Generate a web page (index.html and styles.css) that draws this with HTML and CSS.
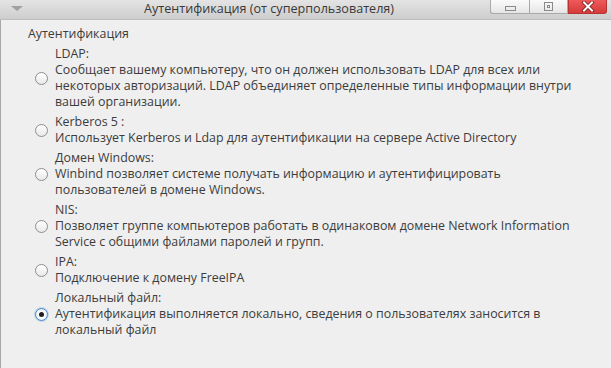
FILE: index.html
```html
<!DOCTYPE html>
<html lang="ru">
<head>
<meta charset="utf-8">
<title>Аутентификация</title>
<link rel="stylesheet" href="styles.css">
</head>
<body>
<div class="window">
  <div class="titlebar">
    <span class="menu-arrow"></span>
    <span class="title">Аутентификация (от суперпользователя)</span>
    <div class="controls">
      <span class="btn btn-min"><span class="min-icon"></span></span>
      <span class="btn btn-max"><span class="max-icon"></span></span>
      <span class="btn btn-close"><svg width="14" height="11" viewBox="0 0 14 11"><path d="M3 1.5 L11 9.5 M11 1.5 L3 9.5" stroke="#7a1515" stroke-width="3.6" stroke-linecap="square"/><path d="M3 1.5 L11 9.5 M11 1.5 L3 9.5" stroke="#ffffff" stroke-width="2" stroke-linecap="square"/></svg></span>
    </div>
  </div>
  <div class="content">
    <div class="group-title">Аутентификация</div>
    <div class="options">
      <label class="option"><span class="radio"></span><span class="text">LDAP:<br>Сообщает вашему компьютеру, что он должен использовать LDAP для всех или<br>некоторых авторизаций. LDAP объединяет определенные типы информации внутри<br>вашей организации.</span></label>
      <label class="option"><span class="radio"></span><span class="text">Kerberos 5 :<br>Использует Kerberos и Ldap для аутентификации на сервере Active Directory</span></label>
      <label class="option"><span class="radio"></span><span class="text">Домен Windows:<br>Winbind позволяет системе получать информацию и аутентифицировать<br>пользователей в домене Windows.</span></label>
      <label class="option"><span class="radio"></span><span class="text">NIS:<br>Позволяет группе компьютеров работать в одинаковом домене Network Information<br>Service с общими файлами паролей и групп.</span></label>
      <label class="option"><span class="radio"></span><span class="text">IPA:<br>Подключение к домену FreeIPA</span></label>
      <label class="option"><span class="radio checked"></span><span class="text">Локальный файл:<br>Аутентификация выполняется локально, сведения о пользователях заносится в<br>локальный файл</span></label>
    </div>
  </div>
</div>
</body>
</html>
```
FILE: styles.css
```css
html, body {
  margin: 0;
  padding: 0;
  background: #efefef;
}
body {
  font-family: "Open Sans", "Noto Sans", sans-serif;
  font-size: 12.4px;
  color: #3c3c3c;
}
.window {
  width: 611px;
  height: 368px;
  overflow: hidden;
  background: #efefef;
  box-sizing: border-box;
}
.titlebar {
  height: 20px;
  display: flex;
  align-items: flex-start;
  background: linear-gradient(#e4e4e4, #cdcdcd);
  border-bottom: 1px solid #bdbdbd;
  box-sizing: border-box;
}
.menu-arrow {
  width: 0;
  height: 0;
  margin: 6px 0 0 11px;
  border-left: 6px solid transparent;
  border-right: 6px solid transparent;
  border-top: 5px solid #a0a0a0;
}
.title {
  margin-left: 121px;
  line-height: 18px;
  font-size: 12.6px;
  color: #383838;
  white-space: nowrap;
}
.controls {
  margin-left: auto;
  margin-right: 4px;
  display: flex;
}
.btn {
  width: 39px;
  height: 14px;
  box-sizing: border-box;
  display: flex;
  align-items: center;
  justify-content: center;
  border: 1px solid #a9a9a9;
  border-top: none;
  background: linear-gradient(#fafafa, #e6e6e6);
}
.btn-min {
  border-radius: 0 0 0 3px;
  border-right: none;
}
.btn-close {
  border-radius: 0 0 3px 0;
  border-color: #b83434;
  background: linear-gradient(#ef5a5a, #d63a3a);
}
.min-icon {
  width: 9px;
  height: 3px;
  margin-top: 4px;
  border: 1px solid #8a8a8a;
}
.max-icon {
  width: 7px;
  height: 7px;
  border: 1px solid #8a8a8a;
  position: relative;
}
.max-icon::after {
  content: "";
  position: absolute;
  left: 2px;
  top: 2px;
  width: 1px;
  height: 1px;
  border: 1px solid #8a8a8a;
}
.content {
  padding: 6px 0 0 27px;
  border-left: 1px solid #a8a8a8;
  height: 348px;
  box-sizing: border-box;
}
.group-title {
  line-height: 16px;
  margin-bottom: 4px;
}
.options {
  display: flex;
  flex-direction: column;
  gap: 4px;
  padding-left: 7px;
}
.option {
  display: flex;
  align-items: center;
  gap: 7px;
}
.radio {
  flex: none;
  width: 13px;
  height: 13px;
  box-sizing: border-box;
  border-radius: 50%;
  border: 1px solid #8e8e8e;
  background: linear-gradient(#ffffff, #e9e9e9);
  display: flex;
  align-items: center;
  justify-content: center;
}
.radio.checked {
  border-color: #4a84c4;
  background: radial-gradient(circle, #ffffff 40%, #c9def4 100%);
  box-shadow: 0 0 0 1px rgba(120, 170, 220, 0.35);
}
.radio.checked::after {
  content: "";
  width: 5px;
  height: 5px;
  border-radius: 50%;
  background: #1e1e1e;
}
.text {
  line-height: 16px;
  white-space: nowrap;
}
```
